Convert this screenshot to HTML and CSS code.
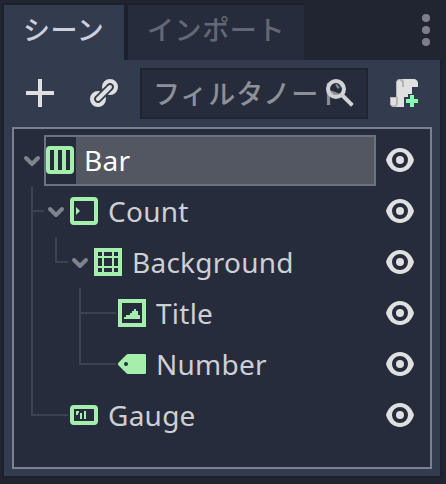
FILE: index.html
```
<!DOCTYPE html>
<html lang="ja">
<head>
<meta charset="utf-8">
<title>シーン</title>
<link rel="stylesheet" href="styles.css">
</head>
<body>
<div class="dock">
  <div class="tabs">
    <div class="tab active">シーン</div>
    <div class="tab">インポート</div>
    <svg class="menu" width="8" height="32" viewBox="0 0 8 32"><circle cx="4" cy="4" r="4"/><circle cx="4" cy="16" r="4"/><circle cx="4" cy="28" r="4"/></svg>
  </div>
  <div class="panel">
    <div class="toolbar">
      <svg class="icon add" viewBox="0 0 16 16"><path d="M7 1h2v6h6v2H9v6H7V9H1V7h6z"/></svg>
      <svg class="icon link" viewBox="0 0 16 16"><g fill="none" stroke="#e0e0e0" stroke-width="2.300"><circle cx="11" cy="5" r="2.850"/><circle cx="5" cy="11" r="2.850"/><g stroke-linecap="round"><path d="M5 11l6-6" stroke="#333b4f" stroke-width="3.800"/><path d="M5 11l6-6" stroke-width="2"/></g></g></svg>
      <div class="filter">
        <span class="placeholder">フィルタノード</span>
        <svg class="icon search" viewBox="0 0 16 16"><g fill="none" stroke="#d0d2d6" stroke-width="2"><circle cx="6" cy="6" r="4"/><path d="m9 9 5.200 5.200"/></g></svg>
      </div>
      <svg class="icon script" viewBox="0 0 16 16"><path d="M6 1C5 1 4 2 4 3v7H1v3c0 1 1 2 2 2h5v-5h2V8.500h2V5h3V3c0-1-1-2-2-2z"/><path d="M6 1C4.900 1 4 1.900 4 3v7H1v3a2 2 0 0 0 4 0V3a1 1 0 0 1 2 0v2h1V3a2 2 0 0 0-2-2zM2 11h2v2a1 1 0 0 1-2 0z" fill="#b4b4b4"/><path d="M4.500 3a1.500 1.500 0 0 1 3 0v2H8v5H4.500zM1.500 10.500H4V13a1.200 1.200 0 0 1-2.500 0z"/><path d="M7 5V3a1 1 0 0 0-1-1V1a2 2 0 0 1 2 2v2z" fill="#b4b4b4"/><path d="M11 9h2v2h2v2h-2v2h-2v-2H9v-2h2z" fill="#84ffb1"/></svg>
    </div>
    <div class="tree">
      <div class="row">
        <svg class="guide" width="30" height="51"><path class="arrow" d="m12 23 6 6 6-6"/></svg>
        <div class="item selected"><svg class="icon node" viewBox="0 0 16 16"><path fill-rule="evenodd" d="M3 1a2 2 0 0 0-2 2v10a2 2 0 0 0 2 2h10a2 2 0 0 0 2-2V3a2 2 0 0 0-2-2zm0 2h2v10H3zm4 0h2v10H7zm4 0h2v10h-2z"/></svg><span>Bar</span></div>
        <svg class="icon eye" viewBox="0 0 16 16"><use href="#eye"/></svg>
      </div>
      <div class="row">
        <svg class="guide" width="54" height="51"><path d="M18 0v51M18 25h12"/><path class="arrow" d="m36 23 6 6 6-6"/></svg>
        <div class="item"><svg class="icon node" viewBox="0 0 16 16"><path fill-rule="evenodd" d="M3 1a2 2 0 0 0-2 2v10a2 2 0 0 0 2 2h10a2 2 0 0 0 2-2V3a2 2 0 0 0-2-2zm0 2h10v10H3z"/><path d="M4 6v4l2-2z"/></svg><span>Count</span></div>
        <svg class="icon eye" viewBox="0 0 16 16"><use href="#eye"/></svg>
      </div>
      <div class="row">
        <svg class="guide" width="78" height="51"><path d="M18 0v51M42 0v25h12"/><path class="arrow" d="m60 23 6 6 6-6"/></svg>
        <div class="item"><svg class="icon node" viewBox="0 0 16 16"><path fill-rule="evenodd" d="M1 1h14v14H1zM3 3v2h2V3zm3 0v2h4V3zm5 0v2h2V3zM3 6v4h2V6zm3 0v4h4V6zm5 0v4h2V6zM3 11v2h2v-2zm3 0v2h4v-2zm5 0v2h2v-2z"/></svg><span>Background</span></div>
        <svg class="icon eye" viewBox="0 0 16 16"><use href="#eye"/></svg>
      </div>
      <div class="row">
        <svg class="guide" width="102" height="51"><path d="M18 0v51M66 0v51M66 25h36"/></svg>
        <div class="item"><svg class="icon node" viewBox="0 0 16 16"><path fill-rule="evenodd" d="M1 1h14v14H1zm2 2v10h10V3zm6 3h1v1h1v2h1v2H4v-1h1V9h2V8h1V7h1z"/></svg><span>Title</span></div>
        <svg class="icon eye" viewBox="0 0 16 16"><use href="#eye"/></svg>
      </div>
      <div class="row">
        <svg class="guide" width="102" height="51"><path d="M18 0v51M66 0v25h36"/></svg>
        <div class="item"><svg class="icon node" viewBox="0 0 16 16"><path fill-rule="evenodd" d="M6 3a1 1 0 0 0-.8.4L1.300 7.200a1.100 1.100 0 0 0 0 1.600l3.900 3.800A1 1 0 0 0 6 13h8.400a.6.6 0 0 0 .6-.6V3.600a.6.6 0 0 0-.6-.6zM5 7a1 1 0 1 1 0 2 1 1 0 0 1 0-2z"/></svg><span>Number</span></div>
        <svg class="icon eye" viewBox="0 0 16 16"><use href="#eye"/></svg>
      </div>
      <div class="row">
        <svg class="guide" width="54" height="51"><path d="M18 0v25h36"/></svg>
        <div class="item"><svg class="icon node" viewBox="0 0 16 16"><path fill-rule="evenodd" d="M3 3a2 2 0 0 0-2 2v6a2 2 0 0 0 2 2h10a2 2 0 0 0 2-2V5a2 2 0 0 0-2-2zm0 2h10v6H3z"/><path d="M4 6h1v2H4zM5 6h.5v1H5zM6 7h1v3H6zM8 6h1v4H8z"/></svg><span>Gauge</span></div>
        <svg class="icon eye" viewBox="0 0 16 16"><defs><path id="eye" fill-rule="evenodd" d="M8 2C4.500 2 2 4.500 1 8c1 3.500 3.500 6 7 6s6-2.500 7-6c-1-3.500-3.500-6-7-6zm0 2a4 4 0 1 1 0 8 4 4 0 0 1 0-8zm0 2a2 2 0 1 0 0 4 2 2 0 0 0 0-4z"/></defs><use href="#eye"/></svg>
      </div>
    </div>
  </div>
</div>
</body>
</html>
```
FILE: styles.css
```
* { box-sizing: border-box; }
body {
  margin: 0;
  background: #202531;
  font-family: "Noto Sans", "Noto Sans CJK JP", sans-serif;
  font-size: 28px;
  line-height: 38px;
  color: #cdcfd5;
}
svg { display: block; flex: none; }
.dock { height: 484px; padding: 3px 4px 0 2px; }
.tabs { display: flex; height: 57px; }
.tab {
  width: 178px;
  height: 57px;
  padding: 6px 0 0 19px;
  background: #262c3b;
  border: 2px solid #1b202b;
  border-width: 2px 0 0 2px;
  color: #636876;
  font-size: 27px;
  font-weight: 500;
  letter-spacing: 0.6px;
  white-space: nowrap;
}
.tab.active {
  width: 124px;
  background: #333b4f;
  border-right-width: 2px;
  color: #cdcfdc;
}
.menu { margin: 11px 12px 0 auto; fill: #7d808a; }
.panel {
  height: 418px;
  padding: 8px 8px 0;
  background: #333b4f;
  border: 2px solid #1b202b;
  border-top: 0;
}
.toolbar { display: flex; height: 59px; }
.icon { width: 32px; height: 32px; fill: #e0e0e0; }
.add { margin: 9px 0 0 12px; }
.link { margin: 9px 0 0 32px; }
.filter {
  display: flex;
  width: 228px;
  height: 51px;
  margin-left: 20px;
  padding-left: 11px;
  background: #262c3b;
  border: 2px solid #1f2430;
}
.placeholder {
  width: 189px;
  padding-top: 5px;
  overflow: hidden;
  white-space: nowrap;
  font-size: 27px;
  font-weight: 500;
  letter-spacing: 0.9px;
  color: #8c9099;
}
.search { margin: 7px 0 0 -18px; }
.script { margin: 9px 0 0 20px; }
.tree {
  height: 342px;
  padding: 6px 14px 0 0;
  background: #262c3b;
  border: 2px solid #7b8191;
}
.row { display: flex; height: 51px; }
.guide { fill: none; stroke: #3c4250; stroke-width: 2; }
.arrow { stroke: #7e838e; stroke-width: 4; stroke-linecap: round; stroke-linejoin: round; }
.item { display: flex; flex: 1; height: 51px; }
.item span { padding: 6px 0 0 8px; letter-spacing: 0.25px; }
.node { margin-top: 9px; fill: #a5efac; }
.selected {
  color: #fff;
  background: linear-gradient(90deg, #262c3b 32px, #535762 32px);
  box-shadow: inset 0 0 0 2px #6b7282;
}
.eye { margin: 9px 0 0 8px; }
```
